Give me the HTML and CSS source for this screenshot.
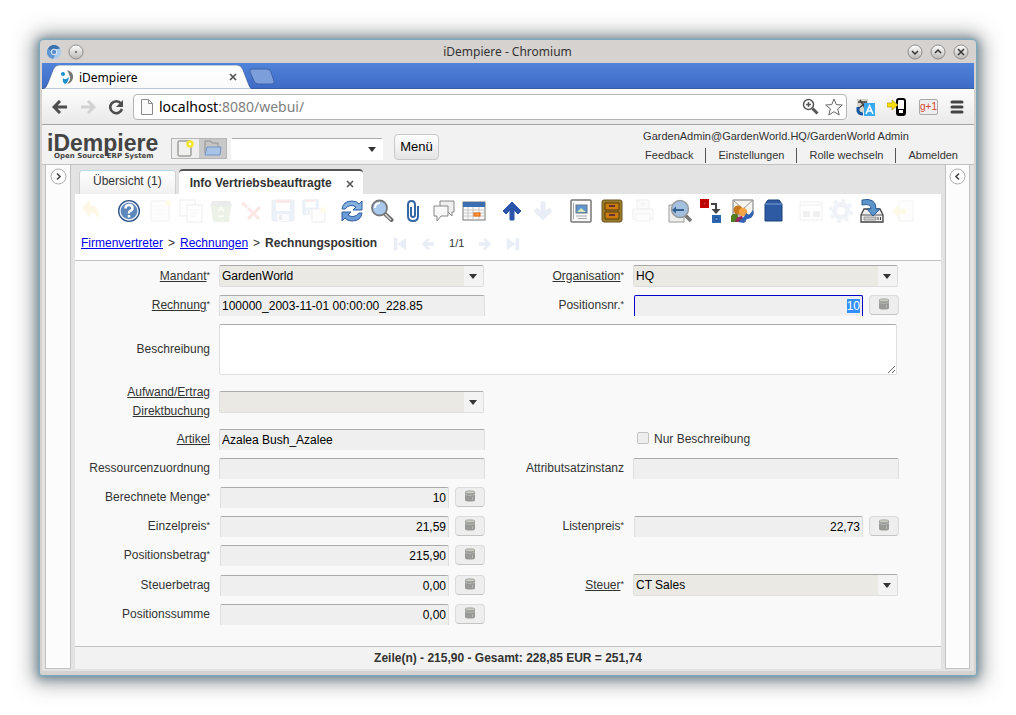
FILE: index.html
```html
<!DOCTYPE html>
<html lang="de">
<head>
<meta charset="utf-8">
<title>iDempiere</title>
<link rel="stylesheet" href="styles.css">
</head>
<body>
<svg class="defs" aria-hidden="true">
  <defs>
    <linearGradient id="knob" x2="0" y2="1"><stop offset="0" stop-color="#fff"/><stop offset="1" stop-color="#b9b7b5"/></linearGradient>
    <linearGradient id="tabfill" x2="0" y2="1"><stop offset="0" stop-color="#fff"/><stop offset="1" stop-color="#fafafa"/></linearGradient>
    <symbol id="db" viewBox="0 0 12 12"><path d="M1 2.500V10q0 1.500 5 1.500t5-1.500V2.500z" fill="#999a98"/><path d="M1 4.500q5 2 10 0" stroke="#b4b6b2" fill="none"/><ellipse cx="6" cy="2.300" rx="5" ry="1.500" fill="#c9cdc2" stroke="#92948f" stroke-width=".7"/><path d="M8.500 7v3" stroke="#b5b6b4"/></symbol>
    <symbol id="floppy" viewBox="0 0 24 24"><rect x="1" y="1" width="22" height="21" rx="2" fill="#4a7cc8" stroke="#2a4b86"/><path d="M5 1h14v11H5z" fill="#fff"/><path d="M5 1h14v3H5z" fill="#d33"/><path d="M6 15h12v7H6z" fill="#ddd"/><path d="M8 16h3v5H8z" fill="#456"/></symbol>
    <symbol id="page" viewBox="0 0 24 24"><rect x="3" y="2" width="18" height="20" rx="1" fill="#f4f4f2" stroke="#777"/><path d="M6 7h10M6 11h12M6 15h12M6 19h8" stroke="#ccc"/><circle cx="20" cy="4" r="3" fill="#fd3"/></symbol>
    <symbol id="arrowup" viewBox="0 0 24 24"><path d="M12 3l9 9-3 3-4-4v10h-4V11l-4 4-3-3z" fill="#2b55aa" stroke="#2b55aa" stroke-linejoin="round"/></symbol>
    <symbol id="step" viewBox="0 0 16 16"><path d="M1 8l7-7 2 2-3 3h8v4H7l3 3-2 2z" fill="#2b55aa"/></symbol>
    <symbol id="edge" viewBox="0 0 16 16"><path d="M1 1h4v14H1zM15 1v14L5 8z" fill="#2b55aa"/></symbol>
  </defs>
</svg>
<div class="window">
  <header class="titlebar">
    <svg width="14" height="14" viewBox="0 0 16 16"><circle cx="8" cy="8" r="8" fill="#a9cbee"/><path d="M1 4a8 8 0 0 1 14 0L8 5 5 8z" fill="#3c72ad"/><path d="M1 4a8 8 0 0 0 6 12l3-6-5-1z" fill="#5f95d0"/><circle cx="8" cy="8" r="3.600" fill="#dcecfb"/><circle cx="8" cy="8" r="2.500" fill="#5a8fc8"/></svg>
    <button class="knob" aria-label="Anheften"><svg viewBox="0 0 16 16"><circle cx="8" cy="8" r="7" fill="url(#knob)" stroke="#8f8d8b"/><circle cx="8" cy="8" r="1" fill="#555"/></svg></button>
    <span class="wintitle">iDempiere - Chromium</span>
    <button class="knob" aria-label="Minimieren"><svg viewBox="0 0 16 16"><circle cx="8" cy="8" r="7" fill="url(#knob)" stroke="#8f8d8b"/><path d="M5 7l3 3 3-3" fill="none" stroke="#333" stroke-width="1.500"/></svg></button>
    <button class="knob" aria-label="Maximieren"><svg viewBox="0 0 16 16"><circle cx="8" cy="8" r="7" fill="url(#knob)" stroke="#8f8d8b"/><path d="M5 9l3-3 3 3" fill="none" stroke="#333" stroke-width="1.500"/></svg></button>
    <button class="knob" aria-label="Schließen"><svg viewBox="0 0 16 16"><circle cx="8" cy="8" r="7" fill="url(#knob)" stroke="#8f8d8b"/><path d="M5 5l6 6M11 5l-6 6" fill="none" stroke="#333" stroke-width="1.500"/></svg></button>
  </header>
  <div class="tabstrip">
    <div class="btab">
      <svg class="btab-shape" viewBox="0 0 210 24" preserveAspectRatio="none"><path d="M0 24q4 0 6-6l5-13q2-5 6-5h178q4 0 6 5l5 13q2 6 4 6z" fill="url(#tabfill)" stroke="#2f5191" stroke-width=".6"/></svg>
      <svg width="14" height="14" viewBox="0 0 14 14"><path d="M7 0q7 2 6 8-1 5-6 6 4-4 3-7Q9 3 7 0z" fill="#777"/><circle cx="3" cy="4" r="2" fill="#1a8fd0"/><path d="M3 8q2 3 6-1-1 6-4 7-3-2-2-6z" fill="#1a8fd0"/></svg>
      <span>iDempiere</span>
      <button class="plain" aria-label="Tab schließen"><svg width="8" height="8" viewBox="0 0 8 8"><path d="M1 1l6 6M7 1L1 7" stroke="#555" stroke-width="1.700"/></svg></button>
    </div>
    <button class="plain newtab" aria-label="Neuer Tab"><svg width="26" height="17" viewBox="0 0 26 17"><path d="M3 1h15q3 0 4 3l3 9q1 3-2 3H9q-3 0-4-3L1 4q-1-3 2-3z" fill="#7c9edb" stroke="#3d62a8"/></svg></button>
  </div>
  <div class="navbar">
    <button class="plain" aria-label="Zurück"><svg width="16" height="14" viewBox="0 0 16 14"><path d="M8 1L2 7l6 6M2 7h13" fill="none" stroke="#4d4d4d" stroke-width="3"/></svg></button>
    <button class="plain" aria-label="Vorwärts"><svg width="16" height="14" viewBox="0 0 16 14"><path d="M8 1l6 6-6 6M14 7H1" fill="none" stroke="#d2d2d2" stroke-width="3"/></svg></button>
    <button class="plain" aria-label="Neu laden"><svg width="16" height="16" viewBox="0 0 16 16"><path d="M13 4.500A6 6 0 1 0 14 10" fill="none" stroke="#4d4d4d" stroke-width="2.600"/><path d="M15 1v7H8z" fill="#4d4d4d"/></svg></button>
    <div class="omnibox">
      <svg width="12" height="16" viewBox="0 0 12 16"><path d="M.5.5h7l4 4v11H.5zM7.500.5v4h4" fill="#fafafa" stroke="#888"/></svg>
      <span class="url"><b>localhost</b>:8080/webui/</span>
      <svg width="17" height="17" viewBox="0 0 17 17"><circle cx="6.500" cy="6.500" r="5" fill="#fff" stroke="#555" stroke-width="1.500"/><path d="M4 6.500h5M6.500 4v5" stroke="#555" stroke-width="1.500"/><path d="M10.500 10.500l5 5" stroke="#555" stroke-width="3"/></svg>
      <svg width="18" height="18" viewBox="0 0 18 18"><path d="M9 1l2.300 5.600 6 .4-4.600 3.900L14.200 17 9 13.700 3.800 17l1.500-6.100L.7 7l6-.4z" fill="#fff" stroke="#666"/></svg>
    </div>
    <svg width="19" height="18" viewBox="0 0 19 18"><path d="M1 1h11v13H1z" fill="#d8d4c8"/><path d="M2 4h9M4 2l5 8M9 5l-7 6" stroke="#444" stroke-width="1.500"/><path d="M2 9v4q1 3 5 3" stroke="#1656a3" stroke-width="3" fill="none"/><path d="M8 5h11v13H8z" fill="#37a9ee"/><path d="M10 16l3.500-8 3.500 8M11 13h5" stroke="#fff" stroke-width="1.600" fill="none"/></svg>
    <svg width="20" height="18" viewBox="0 0 20 18"><rect x="10" y="1" width="8" height="16" rx="2" fill="#fff" stroke="#000" stroke-width="2"/><path d="M10 11h8v6h-8z" fill="#000"/><path d="M12 12h4v3h-4z" fill="#fff"/><path d="M0 5h5V2l6 5-6 5V9H0z" fill="#fce000" stroke="#a58a00" stroke-width=".6"/></svg>
    <span class="gplus">g+1</span>
    <button class="plain" aria-label="Menü"><svg width="14" height="14" viewBox="0 0 14 14"><path d="M2 2h10M2 7h10M2 12h10" stroke="#444" stroke-width="3" stroke-linecap="round"/></svg></button>
  </div>

  <div class="apphead">
    <div class="logo"><span class="logo-name">iDempiere</span><span class="logo-sub">Open Source ERP System</span></div>
    <div class="toggle">
      <button aria-label="Neu"><svg width="18" height="17" viewBox="0 0 18 17"><rect x="1" y="1" width="13" height="15" rx="1" fill="#f0f0ee" stroke="#777"/><circle cx="13" cy="4" r="2.500" fill="#fff" stroke="#f6e52a" stroke-width="2.500"/></svg></button>
      <button class="on" aria-label="Öffnen"><svg width="18" height="17" viewBox="0 0 18 17"><path d="M1 13V1h6l1 2h6v10z" fill="#c5c5c5" stroke="#909090"/><path d="M3 7h14l-1 8H1z" fill="#a9c3e6" stroke="#7396c6"/></svg></button>
    </div>
    <span class="pick search"><select aria-label="Suche"><option></option></select></span>
    <button class="menu">Menü</button>
    <div class="user">
      <div>GardenAdmin@GardenWorld.HQ/GardenWorld Admin</div>
      <nav><a href="#">Feedback</a><a href="#">Einstellungen</a><a href="#">Rolle wechseln</a><a href="#">Abmelden</a></nav>
    </div>
  </div>

  <div class="desk">
    <aside class="side"><button class="plain" aria-label="Öffnen"><svg width="17" height="17" viewBox="0 0 17 17"><circle cx="8.500" cy="8.500" r="7.500" fill="#fff" stroke="#aaa"/><path d="M7 5.500l3 3-3 3" fill="none" stroke="#444" stroke-width="1.600"/></svg></button></aside>
    <main class="center">
      <div class="tabs">
        <button class="tab">Übersicht (1)</button>
        <div class="tab active"><span>Info Vertriebsbeauftragte</span><button class="plain" aria-label="Schließen"><svg width="8" height="8" viewBox="0 0 8 8"><path d="M1 1l6 6M7 1L1 7" stroke="#555" stroke-width="1.600"/></svg></button></div>
      </div>
      <div class="toolbar">
        <button class="dim" aria-label="Rückgängig"><svg viewBox="0 0 24 24"><path d="M3 9l8-8v5q10 1 9 14-3-7-9-6v5z" fill="#f0b400"/></svg></button><i></i>
        <button aria-label="Hilfe"><svg viewBox="0 0 24 24"><circle cx="12" cy="12" r="11" fill="#2e5288"/><circle cx="12" cy="12" r="9" fill="#5c87bb" stroke="#e9eff8" stroke-width="1.400"/><path d="M8.500 9.500Q8.500 6 12 6t3.500 3.200Q15.500 11 13 12q-1 .5-1 2.500M12 16v2.500" stroke="#fff" stroke-width="2.500" fill="none"/></svg></button>
        <button class="dim" aria-label="Neu"><svg><use href="#page"/></svg></button>
        <button class="dim" aria-label="Kopieren"><svg viewBox="0 0 24 24"><rect x="1" y="1" width="15" height="16" fill="#f6f6f6" stroke="#666"/><rect x="8" y="6" width="15" height="17" fill="#f6f6f6" stroke="#666"/><path d="M11 11h9M11 14h9M11 17h6" stroke="#999"/></svg></button>
        <button class="dim" aria-label="Löschen"><svg viewBox="0 0 24 24"><path d="M2 7h20l-2 16H4z" fill="#5b8a28"/><path d="M3 2h18l2 5H1z" fill="#444"/><path d="M9 12l3-3 3 3M9 17h6" stroke="#cfe6a0" stroke-width="2" fill="none"/></svg></button>
        <button class="dim" aria-label="Auswahl löschen"><svg viewBox="0 0 24 24"><path d="M8 9l11 11M20 8L8 20M2 4l5 4" stroke="#e01010" stroke-width="3"/></svg></button>
        <button class="dim" aria-label="Speichern"><svg><use href="#floppy"/></svg></button>
        <button class="dim" aria-label="Speichern und neu"><svg viewBox="0 0 24 24"><use href="#floppy" width="17" height="17"/><rect x="10" y="10" width="13" height="13" fill="#eee" stroke="#666"/><circle cx="21" cy="11" r="3" fill="#fd3"/></svg></button><i></i>
        <button aria-label="Aktualisieren"><svg viewBox="0 0 24 24"><path d="M2 10Q3 2 12 2q5 0 7 3l3-3v9h-9l3-3q-6-4-11 2z" fill="#86b0e0" stroke="#2f5d9e"/><path d="M22 14q-1 8-10 8-5 0-7-3l-3 3v-9h9l-3 3q6 4 11-2z" fill="#6b9bd8" stroke="#2f5d9e"/></svg></button>
        <button aria-label="Suchen"><svg viewBox="0 0 24 24"><path d="M14 14l7.500 7" stroke="#666" stroke-width="4" stroke-linecap="round"/><path d="M15 15l6 6" stroke="#ddd" stroke-width="1.500"/><circle cx="9.500" cy="9" r="7.500" fill="#a8c8ee" stroke="#777" stroke-width="1.800"/><path d="M5 9q0-5 5-5" stroke="#fff" stroke-width="2" fill="none"/></svg></button>
        <button aria-label="Anhang"><svg viewBox="0 0 24 24"><path d="M10 8v8q0 2 2 2t2-2V6q0-4-3.500-4T7 6v11q0 5 5 5t5-5V7" fill="none" stroke="#3465a4" stroke-width="2"/></svg></button>
        <button aria-label="Chat"><svg viewBox="0 0 24 24"><path d="M8 2h14v11h-2v4l-4-4H8z" fill="#eee" stroke="#888"/><path d="M2 7h14v10H9l-4 5v-5H2z" fill="#f8f8f8" stroke="#888"/></svg></button>
        <button aria-label="Tabelle"><svg viewBox="0 0 24 24"><rect x="1" y="3" width="22" height="18" fill="#fafafa" stroke="#777"/><path d="M1 3h22v5H1z" fill="#3d6fb0"/><path d="M1 11h22M1 14h22M1 17h22M6 8v13M11 8v13M17 8v13" stroke="#bbb" stroke-width=".8"/><rect x="12" y="14" width="6" height="3" fill="#fc9c45" stroke="#e06000"/></svg></button><i></i>
        <button aria-label="Übergeordnet"><svg><use href="#arrowup"/></svg></button>
        <button class="dim" aria-label="Detail"><svg class="flip-y"><use href="#arrowup"/></svg></button><i></i>
        <button aria-label="Bericht"><svg viewBox="0 0 24 24"><rect x="2" y="1" width="20" height="22" rx="1" fill="#f8f8f8" stroke="#777" stroke-width="1.500"/><rect x="7" y="6" width="11" height="8" fill="#5e93d2" stroke="#678"/><path d="M8 13l4-4 5 4z" fill="#d6e6b0"/><path d="M7 17h11M9 19.500h9M4.500 4v16" stroke="#aaa"/></svg></button>
        <button aria-label="Archiv"><svg viewBox="0 0 24 24"><rect x="2" y="1" width="20" height="22" rx="2" fill="#9a7b2c" stroke="#6b5520"/><path d="M5 4h14v7H5zM5 13h14v7H5z" fill="#cc7d12" stroke="#5b3a06"/><path d="M9 7h6M9 16h6" stroke="#633" stroke-width="2"/></svg></button>
        <button class="dim" aria-label="Drucken"><svg viewBox="0 0 24 24"><path d="M6 1h12v9H6zM2 10h20v10H2z" fill="#ddd" stroke="#777"/><path d="M5 15h14v7H5z" fill="#eee" stroke="#888"/><path d="M12 8V3M9 6l3-3 3 3" fill="none" stroke="#888"/></svg></button><i></i>
        <button aria-label="Zoom"><svg viewBox="0 0 24 24"><path d="M1 6h15v17H1z" fill="#eee" stroke="#999"/><path d="M17 16l6 6" stroke="#777" stroke-width="3.500"/><circle cx="12" cy="10" r="8.500" fill="#a4c0e0" stroke="#999" stroke-width="1.500"/><path d="M4 11l4-3.500V10h8v2H8v2.500z" fill="#34618f"/></svg></button>
        <button aria-label="Workflow"><svg viewBox="0 0 24 24"><path d="M1 0h9v9H1z" fill="#c40000"/><path d="M4 3h3v3H4z" fill="#e33" stroke="#900"/><path d="M12 5h5v7" stroke="#444" stroke-width="2" fill="none"/><path d="M12.500 10h9L17 15z" fill="#444"/><path d="M13 16h9v8h-9z" fill="#2f66b0"/><path d="M16 18.500h3v3h-3z" fill="#6a9be0" stroke="#1b4b90"/></svg></button>
        <button aria-label="Anfragen"><svg viewBox="0 0 24 24"><path d="M3 1h20v15H3z" fill="#f4f3ee" stroke="#777"/><path d="M3 1l10 9L23 1" fill="none" stroke="#999"/><circle cx="8" cy="11" r="4.500" fill="#c9771c"/><path d="M1 23v-6q2-3 6-2l4 8z" fill="#4e7d22"/><circle cx="13" cy="13" r="4.200" fill="#f2a444"/><path d="M5 23q1-6 7-6l4 6z" fill="#962a5a"/><path d="M8 23q7-5 8-9l3 2 4-5q2 8-6 9l-3 4z" fill="#2f63b5"/></svg></button>
        <button aria-label="Produktinfo"><svg viewBox="0 0 24 24"><path d="M4 5l3-4h11l3 4v17H4z" fill="#2d5aa3" stroke="#1d4078"/><path d="M4 5h17" stroke="#7fa0d4"/></svg></button><i></i>
        <button class="dim" aria-label="Anpassen"><svg viewBox="0 0 24 24"><path d="M1 3h22v18H1zM1 6h22" fill="#fff" stroke="#777"/><path d="M4 12h7v6H4zM14 12h7v6h-7z" fill="#777"/></svg></button>
        <button class="dim" aria-label="Prozess"><svg viewBox="0 0 24 24"><circle cx="12" cy="12" r="6.500" fill="none" stroke="#6b8fc0" stroke-width="5"/><circle cx="12" cy="12" r="10.500" fill="none" stroke="#6b8fc0" stroke-width="3" stroke-dasharray="4 4.250"/></svg></button>
        <button aria-label="Export"><svg viewBox="0 0 24 24"><path d="M4 10h16l3 6v7H1v-7z" fill="#eee" stroke="#444" stroke-width="1.300"/><path d="M1 16h22" stroke="#555"/><path d="M4 18h12v3H4z" fill="#ccc" stroke="#777" stroke-width=".6"/><path d="M18 18v3M20.500 18v3" stroke="#444"/><path d="M2 1q14-3 14 9h4l-7 7-6-7h4Q11 4 2 6z" fill="#5b95cc" stroke="#2d5c93"/></svg></button>
        <button class="dim" aria-label="Import"><svg viewBox="0 0 24 24"><path d="M8 2h14v20H8z" fill="#eee" stroke="#999"/><path d="M1 12l7-6v4h7v5H8v4z" fill="#e8d800"/></svg></button>
      </div>
      <div class="crumbs">
        <a href="#">Firmenvertreter</a><span>&gt;</span><a href="#">Rechnungen</a><span>&gt;</span><strong>Rechnungsposition</strong>
        <div class="pager">
          <button class="plain" aria-label="Erster"><svg><use href="#edge"/></svg></button>
          <button class="plain" aria-label="Voriger"><svg><use href="#step"/></svg></button>
          <span>1/1</span>
          <button class="plain" aria-label="Nächster"><svg class="flip-x"><use href="#step"/></svg></button>
          <button class="plain" aria-label="Letzter"><svg class="flip-x"><use href="#edge"/></svg></button>
        </div>
      </div>
      <form class="form">
        <label for="f1"><u>Mandant</u><sup>*</sup></label>
        <span class="pick"><select id="f1"><option>GardenWorld</option></select></span>
        <label for="f2"><u>Organisation</u><sup>*</sup></label>
        <span class="pick"><select id="f2"><option>HQ</option></select></span>

        <label for="f3"><u>Rechnung</u><sup>*</sup></label>
        <input class="text" id="f3" value="100000_2003-11-01 00:00:00_228.85">
        <label for="f4">Positionsnr.<sup>*</sup></label>
        <div class="num"><input class="text" id="f4" value="10"><button type="button" aria-label="Rechner"><svg><use href="#db"/></svg></button></div>

        <label for="f5">Beschreibung</label>
        <textarea class="text wide" id="f5"></textarea>

        <label for="f6"><u>Aufwand/Ertrag Direktbuchung</u></label>
        <span class="pick"><select id="f6"><option></option></select></span>

        <label class="first" for="f7"><u>Artikel</u></label>
        <input class="text" id="f7" value="Azalea Bush_Azalee">
        <div class="check"><input type="checkbox" id="f8"><label for="f8">Nur Beschreibung</label></div>

        <label class="first" for="f9">Ressourcenzuordnung</label>
        <input class="text" id="f9">
        <label for="f10">Attributsatzinstanz</label>
        <input class="text" id="f10">

        <label class="first" for="f11">Berechnete Menge<sup>*</sup></label>
        <div class="num"><input class="text" id="f11" value="10"><button type="button" aria-label="Rechner"><svg><use href="#db"/></svg></button></div>

        <label class="first" for="f12">Einzelpreis<sup>*</sup></label>
        <div class="num"><input class="text" id="f12" value="21,59"><button type="button" aria-label="Rechner"><svg><use href="#db"/></svg></button></div>
        <label for="f13">Listenpreis<sup>*</sup></label>
        <div class="num"><input class="text" id="f13" value="22,73"><button type="button" aria-label="Rechner"><svg><use href="#db"/></svg></button></div>

        <label class="first" for="f14">Positionsbetrag<sup>*</sup></label>
        <div class="num"><input class="text" id="f14" value="215,90"><button type="button" aria-label="Rechner"><svg><use href="#db"/></svg></button></div>

        <label class="first" for="f15">Steuerbetrag</label>
        <div class="num"><input class="text" id="f15" value="0,00"><button type="button" aria-label="Rechner"><svg><use href="#db"/></svg></button></div>
        <label for="f16"><u>Steuer</u><sup>*</sup></label>
        <span class="pick"><select id="f16"><option>CT Sales</option></select></span>

        <label class="first" for="f17">Positionssumme</label>
        <div class="num"><input class="text" id="f17" value="0,00"><button type="button" aria-label="Rechner"><svg><use href="#db"/></svg></button></div>
      </form>
      <footer class="status">Zeile(n) - 215,90 - Gesamt: 228,85 EUR = 251,74</footer>
    </main>
    <aside class="side"><button class="plain" aria-label="Öffnen"><svg width="17" height="17" viewBox="0 0 17 17"><circle cx="8.500" cy="8.500" r="7.500" fill="#fff" stroke="#aaa"/><path d="M10 5.500l-3 3 3 3" fill="none" stroke="#444" stroke-width="1.600"/></svg></button></aside>
  </div>
</div>
<script src="app.js"></script>
</body>
</html>
```

FILE: styles.css
```css
* { box-sizing: border-box; }
body {
  margin: 0;
  padding: 40px;
  min-height: 100vh;
  display: flex;
  background: #fff;
  color: #333;
  font: 12px/19px "Liberation Sans", Arial, sans-serif;
}
button, input, select, textarea { font: inherit; color: #000; margin: 0; }
svg { display: block; flex: none; }
.defs { position: absolute; width: 0; height: 0; }
.plain { border: 0; padding: 0; background: none; }

.window {
  flex: 1;
  min-width: 0;
  display: flex;
  flex-direction: column;
  padding: 0 2px 4px;
  background: #d6d2cf;
  border-radius: 4px 4px 2px 2px;
  box-shadow: 0 0 2px 1px #74acc8, 0 1px 8px 3px rgba(80, 115, 135, .6), 0 1px 20px 7px rgba(70, 70, 70, .5);
}
.titlebar {
  display: flex;
  align-items: center;
  gap: 7px;
  height: 23px;
  padding: 0 5px;
  font-family: "Noto Sans", sans-serif;
}
.knob { width: 16px; height: 16px; padding: 0; border: 0; background: none; }
.knob svg { width: 16px; height: 16px; }
.wintitle { flex: 1; padding-left: 24px; text-align: center; }

.tabstrip {
  display: flex;
  align-items: flex-end;
  height: 26px;
  background: linear-gradient(#5083d9, #3e6bc6);
  border-bottom: 1px solid #3d5e9c;
  font-family: "Noto Sans", sans-serif;
}
.btab {
  position: relative;
  display: flex;
  align-items: center;
  gap: 5px;
  width: 210px;
  height: 24px;
  margin-bottom: -1px;
  padding: 0 15px 0 18px;
  color: #000;
}
.btab > * { position: relative; }
.btab .btab-shape { position: absolute; inset: 0; width: 100%; height: 100%; }
.btab span { flex: 1; }
.newtab { margin-bottom: 3px; margin-left: -3px; }

.navbar {
  display: flex;
  align-items: center;
  gap: 12px;
  height: 36px;
  padding: 0 10px;
  background: linear-gradient(#fdfdfd, #e9e9e9);
  border-bottom: 1px solid #a5a5a5;
}
.omnibox {
  flex: 1;
  min-width: 0;
  display: flex;
  align-items: center;
  gap: 6px;
  height: 26px;
  margin: 0 -3px;
  padding: 0 3px 0 7px;
  background: #fff;
  border: 1px solid #b5b5b5;
  border-radius: 4px;
}
.url { flex: 1; color: #808080; font: 14px/20px "Noto Sans", sans-serif; }
.url b { color: #000; font-weight: 400; }
.gplus {
  border: 1px solid #aaa;
  border-radius: 2px;
  background: #eee;
  color: #d8452f;
  font-size: 10px;
  line-height: 14px;
}

.apphead {
  display: flex;
  align-items: center;
  height: 40px;
  padding: 0 16px 0 5px;
  background: #f2f2f2;
  border-bottom: 1px solid #c2c2c2;
}
.logo { display: flex; flex-direction: column; padding-top: 4px; color: #444; font-weight: 700; }
.logo-name { font-size: 23px; line-height: 20px; }
.logo-sub { padding-left: 7px; font: 700 7px/7px "DejaVu Sans", sans-serif; }
.toggle { display: flex; margin: 8px 4px 0 13px; border: 1px solid #b5b5b5; }
.toggle button { display: grid; place-items: center; width: 27px; height: 19px; padding: 0; border: 0; background: #eee; }
.toggle .on { background: #c8c8c8; }
.search { width: 152px; margin-top: 8px; }
.menu {
  height: 26px;
  margin: 4px 0 0 10px;
  padding: 0 5px;
  border: 1px solid #c8c8c8;
  border-radius: 4px;
  background: linear-gradient(#fff, #e4e4e4);
  font-size: 13px;
}
.user { margin-left: auto; font-size: 11px; line-height: 18px; }
.user nav { display: flex; padding: 3px 0 0 2px; line-height: 15px; }
.user a { padding: 0 12px; border-left: 1px solid #555; color: #333; text-decoration: none; }
.user a:first-child { padding-left: 0; border: 0; }
.user a:last-child { padding-right: 0; }

.desk {
  flex: 1;
  display: grid;
  grid-template-columns: 26px minmax(0, 1fr) 25px;
  gap: 4px;
  padding: 0 4px 2px 3px;
  background: #e3e3e3;
}
.side {
  display: flex;
  justify-content: center;
  align-items: flex-start;
  padding-top: 3px;
  background: #fcfcfc;
  border: 1px solid #c2c2c2;
  border-top: 0;
}
.center { display: flex; flex-direction: column; background: #fff; }
.tabs { display: flex; align-items: flex-end; gap: 3px; height: 29px; padding: 4px 4px 0; background: #e3e3e3; }
.tab {
  height: 24px;
  padding: 0 13px 2px;
  border: 1px solid #cfcfcf;
  border-top: 1px solid #b5dbe9;
  border-bottom: 0;
  border-radius: 4px 4px 0 0;
  background: linear-gradient(#fff, #f0f0f0);
  color: #333;
}
.tab.active {
  display: flex;
  align-items: center;
  gap: 14px;
  height: 25px;
  padding: 2px 9px 0 11px;
  border: 0;
  border-top: 2px solid #555;
  background: #fff;
  font-weight: 700;
}
.toolbar { display: flex; height: 34px; padding: 0 23px 0 1px; align-items: center; }
.toolbar button { flex: 34 1 0; min-width: 0; display: grid; place-items: center; padding: 0; border: 0; background: none; }
.toolbar i { flex: 8 1 0; }
.toolbar svg { width: 24px; height: 24px; }
.dim { opacity: .1; }
.flip-y { transform: scaleY(-1); }
.flip-x { transform: scaleX(-1); }
.crumbs { display: flex; gap: 5px; height: 33px; padding: 6px 6px 0; border-bottom: 1px solid #c2c2c2; }
.crumbs a { color: #00e; }
.pager { display: flex; align-items: center; gap: 14px; height: 19px; padding-left: 11px; font-size: 11px; }
.pager svg { width: 14px; height: 14px; opacity: .1; }

.form {
  flex: 1;
  display: grid;
  grid-template-columns: minmax(0, 135fr) minmax(0, 266fr) minmax(0, 130fr) minmax(0, 266fr);
  align-content: start;
  align-items: center;
  gap: 8px 9px;
  padding: 4px 42px 20px 0;
  background: #f9f9f9;
}
.form > label { text-align: right; }
.form > .first { grid-column: 1; }
.form > label[for="f6"] { padding-left: 40px; }
sup { font-size: 9px; line-height: 0; vertical-align: 2px; }
.text {
  width: 100%;
  min-width: 0;
  height: 21px;
  padding: 0 2px;
  border: 1px solid #dedede;
  border-top-color: #aaa;
  border-bottom: 0;
  border-radius: 2px 2px 0 0;
  background: #efefef;
  outline: 0;
}
.wide {
  grid-column: 2 / -1;
  width: auto;
  height: 51px;
  margin-right: 2px;
  background: #fff;
  border-bottom: 1px solid #dedede;
  border-radius: 2px;
}
.num { display: flex; align-items: flex-start; gap: 6px; padding-left: 1px; }
.num .text { flex: 1; text-align: right; }
.num .text:focus { border-color: #00c; }
.text::selection { background: #3390ff; color: #fff; }
.num button {
  display: grid;
  place-items: center;
  width: 30px;
  height: 20px;
  padding: 0 0 2px;
  border: 1px solid #dcdcdc;
  border-bottom-color: #c4c4c4;
  border-radius: 4px;
  background: #eee;
}
.num svg { width: 12px; height: 12px; }
.pick { position: relative; display: block; margin-right: 1px; }
.pick select {
  display: block;
  width: 100%;
  height: 22px;
  padding: 0 20px 0 2px;
  appearance: none;
  border: 1px solid #dedede;
  border-top-color: #aaa;
  border-radius: 2px;
  background: linear-gradient(#f3f3f3, #f3f3f3) right / 19px 100% no-repeat #eae9e3;
}
.search select { background: #fff; border-color: #aaa #fff #fff; }
.pick::after {
  content: "";
  position: absolute;
  top: 9px;
  right: 7px;
  border: 4px solid transparent;
  border-top: 5px solid #333;
  border-bottom: 0;
  pointer-events: none;
}
.check { grid-column: 4; display: flex; align-items: center; gap: 5px; padding-left: 4px; }
.check input {
  width: 12px;
  height: 12px;
  margin-bottom: 4px;
  appearance: none;
  border: 1px solid #c2c2c2;
  border-radius: 2px;
  background: #eee;
}
.status {
  height: 23px;
  border-top: 1px solid #c2c2c2;
  background: #f2f2f2;
  font-weight: 700;
  line-height: 22px;
  text-align: center;
}
```

FILE: app.js
```js
const field = document.getElementById("f4");
field.focus();
field.select();
```
